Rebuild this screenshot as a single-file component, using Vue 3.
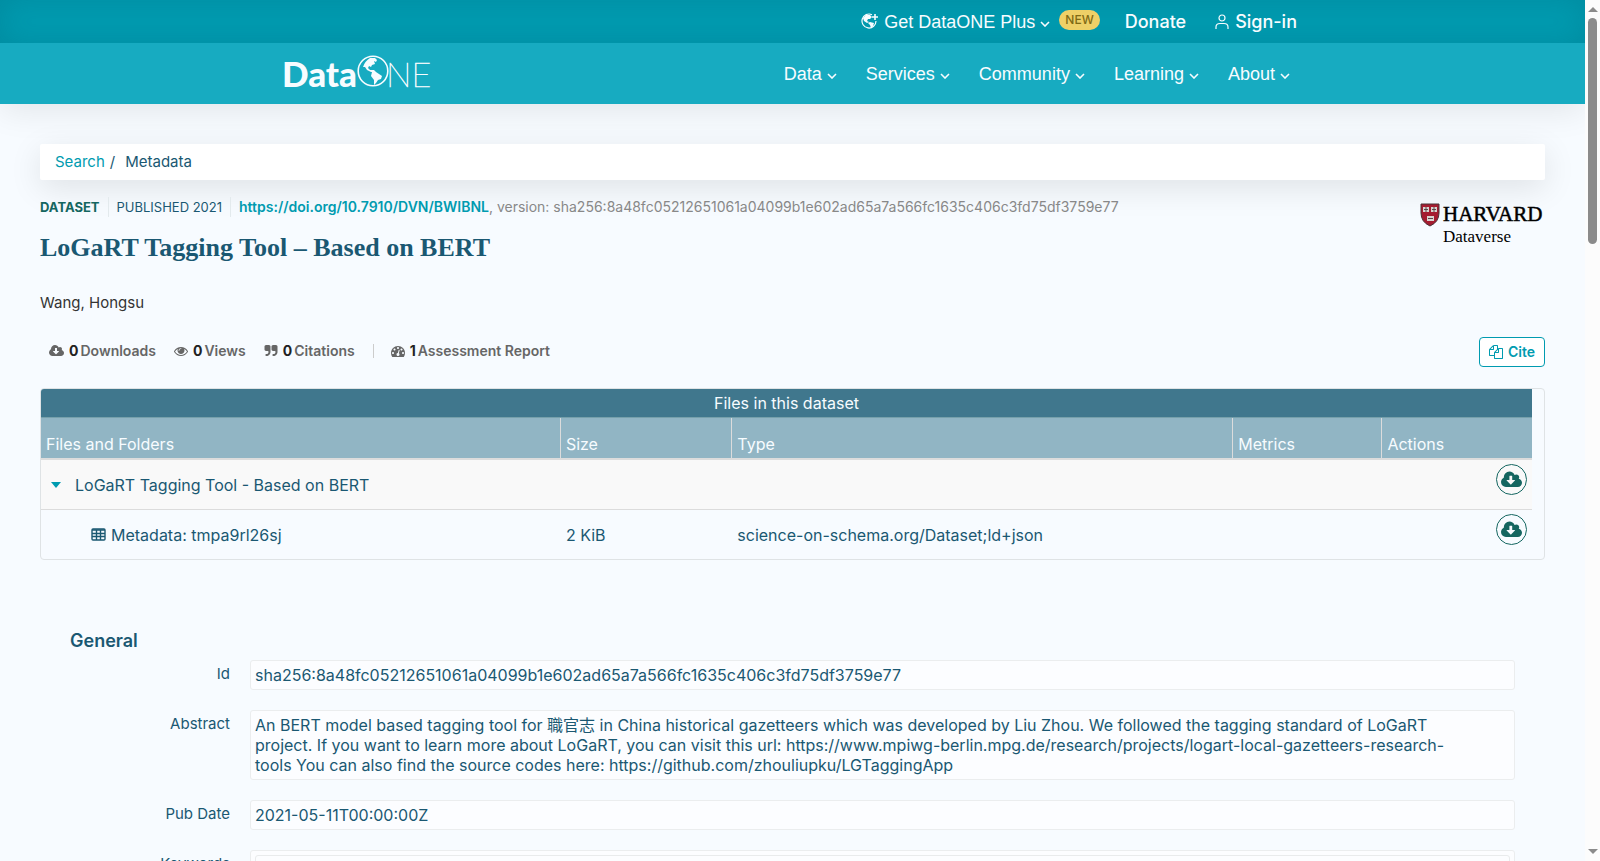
<script setup>
const menu = ['Data', 'Services', 'Community', 'Learning', 'About']

const columns = [
  { name: 'Files and Folders', cls: 'col-name' },
  { name: 'Size', cls: 'col-size' },
  { name: 'Type', cls: 'col-type' },
  { name: 'Metrics', cls: 'col-metrics' },
  { name: 'Actions', cls: 'col-actions' }
]

const cloud =
  'M1280 928q0-14-9-23t-23-9h-224v-352q0-13-9.5-22.5t-22.5-9.5h-192q-13 0-22.5 9.5t-9.5 22.5v352h-224q-13 0-22.5 9.5t-9.5 22.5q0 14 9 23l352 352q9 9 23 9t23-9l351-351q10-12 10-24zm640 224q0 159-112.5 271.5t-271.5 112.5h-1088q-185 0-316.5-131.5t-131.5-316.5q0-130 70-240t188-165q-2-30-2-43 0-212 150-362t362-150q156 0 285.5 87t188.5 231q71-62 166-62 106 0 181 75t75 181q0 76-41 138 130 31 213.5 135.5t83.5 238.5z'
const eye =
  'M1664 960q-152-236-381-353 61 104 61 225 0 185-131.5 316.5t-316.5 131.5-316.5-131.5-131.5-316.5q0-121 61-225-229 117-381 353 133 205 333.5 326.5t434.5 121.5 434.5-121.5 333.5-326.5zm-720-384q0-20-14-34t-34-14q-125 0-214.5 89.5t-89.5 214.5q0 20 14 34t34 14 34-14 14-34q0-86 61-147t147-61q20 0 34-14t14-34zm848 384q0 34-20 69-140 230-376.5 368.5t-499.5 138.5-499.5-139-376.5-368q-20-35-20-69t20-69q140-229 376.5-368t499.5-139 499.5 139 376.5 368q20 35 20 69z'
const quote =
  'M832 320v704q0 104-40.5 198.5t-109.5 163.5-163.5 109.5-198.5 40.5h-64q-26 0-45-19t-19-45v-128q0-26 19-45t45-19h64q106 0 181-75t75-181v-32q0-40-28-68t-68-28h-224q-80 0-136-56t-56-136v-384q0-80 56-136t136-56h384q80 0 136 56t56 136zm896 0v704q0 104-40.5 198.5t-109.5 163.5-163.5 109.5-198.5 40.5h-64q-26 0-45-19t-19-45v-128q0-26 19-45t45-19h64q106 0 181-75t75-181v-32q0-40-28-68t-68-28h-224q-80 0-136-56t-56-136v-384q0-80 56-136t136-56h384q80 0 136 56t56 136z'
const gauge =
  'M384 1152q0-53-37.5-90.5t-90.5-37.5-90.5 37.5-37.5 90.5 37.5 90.5 90.5 37.5 90.5-37.5 37.5-90.5zm192-448q0-53-37.5-90.5t-90.5-37.5-90.5 37.5-37.5 90.5 37.5 90.5 90.5 37.5 90.5-37.5 37.5-90.5zm428 481l101-382q6-26-7.5-48.5t-38.5-29.5-48 6.5-30 39.5l-101 382q-60 5-107 43.5t-63 98.5q-20 77 20 146t117 89 146-20 89-117q16-60-6-117t-72-91zm660-33q0-53-37.5-90.5t-90.5-37.5-90.5 37.5-37.5 90.5 37.5 90.5 90.5 37.5 90.5-37.5 37.5-90.5zm-640-640q0-53-37.5-90.5t-90.5-37.5-90.5 37.5-37.5 90.5 37.5 90.5 90.5 37.5 90.5-37.5 37.5-90.5zm448 192q0-53-37.5-90.5t-90.5-37.5-90.5 37.5-37.5 90.5 37.5 90.5 90.5 37.5 90.5-37.5 37.5-90.5zm320 448q0 261-141 483-19 29-54 29h-1402q-35 0-54-29-141-221-141-483 0-182 71-348t191-286 286-191 348-71 348 71 286 191 191 286 71 348z'
const files =
  'M1696 384q40 0 68 28t28 68v1216q0 40-28 68t-68 28h-960q-40 0-68-28t-28-68v-288h-544q-40 0-68-28t-28-68v-672q0-40 20-88t48-76l408-408q28-28 76-48t88-20h416q40 0 68 28t28 68v328q68-40 128-40h416zm-544 213l-299 299h299v-299zm-640-384l-299 299h299v-299zm196 647l316-316v-416h-384v416q0 40-28 68t-68 28h-416v640h512v-256q0-40 20-88t48-76zm956 804v-1152h-384v416q0 40-28 68t-68 28h-416v640h896z'
const northAmerica = 'M6 12 Q8 6 13 3 L18 3 L20 5 L19 7 L17 6 L18 9 L15 10 L14 12 L12 11 L11 13 L13 15 L17 15 L19 17 L14 17 L10 15 L8 12 Z'
const southAmerica = 'M15 17 L19 17 L22 19 L25 21 L24 24 L21 25 L19 28 L17 30 L17 25 L14 21 Z'
</script>

<template>
  <div class="window">
    <div class="page">
      <header>
        <div class="topbar">
          <div class="bar">
            <button class="plus" type="button">
              <svg class="globe-plus" viewBox="0 0 18 17" aria-hidden="true">
                <path d="M11 1.700 A7 7 0 1 0 15 8" fill="none" stroke="currentColor" stroke-width="1.200" />
                <path d="M2 5 L5 2 L9 2 L11 4 L9 6 L7 6 L6 8 L8 9 L6 10 L3 8 Z M9 9 L13 10 L12 13 L10 15 L9 12 L7 10 Z" fill="currentColor" />
                <path d="M14 1 V7 M11 4 H17" stroke="currentColor" stroke-width="1.600" />
              </svg>
              Get DataONE Plus
              <svg class="chevron" viewBox="0 0 10 6" aria-hidden="true"><path d="M1 1 L5 5 L9 1" /></svg>
            </button>
            <span class="new">NEW</span>
            <a class="donate" href="#">Donate</a>
            <a class="signin" href="#">
              <svg viewBox="0 0 14 16" aria-hidden="true">
                <circle cx="7" cy="4" r="3" />
                <path d="M1 15 V13 Q1 9.500 5 9.500 H9 Q13 9.500 13 13 V15" />
              </svg>
              Sign-in
            </a>
          </div>
        </div>
        <nav class="mainbar">
          <div class="bar">
            <a class="brand" href="#" aria-label="DataONE">
              <svg viewBox="0 0 160 50">
                <text class="brand-data" x="0" y="38">Data</text>
                <g transform="translate(75 6)">
                  <circle cx="16" cy="16" r="14.800" fill="none" stroke="#f7fcff" stroke-width="1.600" />
                  <path :d="northAmerica" fill="#f7fcff" />
                  <path :d="southAmerica" fill="#f7fcff" />
                </g>
                <text class="brand-one" x="104" y="38">NE</text>
              </svg>
            </a>
            <ul class="menu">
              <li v-for="item in menu" :key="item">
                <button type="button">
                  {{ item }}
                  <svg class="chevron" viewBox="0 0 10 6" aria-hidden="true"><path d="M1 1 L5 5 L9 1" /></svg>
                </button>
              </li>
            </ul>
          </div>
        </nav>
      </header>

      <main>
        <nav class="crumbs">
          <a href="#">Search</a><span class="slash">/</span><span>Metadata</span>
        </nav>

        <section class="heading">
          <div class="intro">
            <p class="citation">
              <strong class="kind">DATASET</strong>
              <span class="published">PUBLISHED 2021</span>
              <span class="ident"><a href="#">https://doi.org/10.7910/DVN/BWIBNL</a>, version: sha256:8a48fc05212651061a04099b1e602ad65a7a566fc1635c406c3fd75df3759e77</span>
            </p>
            <h1>LoGaRT Tagging Tool – Based on BERT</h1>
          </div>
          <a class="harvard" href="#" aria-label="Harvard Dataverse">
            <svg viewBox="0 0 126 44">
              <path d="M1 1 H19 V10 Q19 19 10 23 Q1 19 1 10 Z" fill="#a51c30" stroke="#4b3237" stroke-width="1" />
              <g fill="#d9d4d0">
                <rect x="3" y="4" width="6" height="5" />
                <rect x="11" y="4" width="6" height="5" />
                <rect x="7" y="13" width="7" height="5" />
              </g>
              <path d="M4 6.500 H8 M12 6.500 H16 M8 15.500 H13 M6 4 V9 M14 4 V9" stroke="#59494b" stroke-width="1" />
              <text class="harvard-name" x="23" y="18">HARVARD</text>
              <text class="harvard-sub" x="23" y="39">Dataverse</text>
            </svg>
          </a>
        </section>

        <p class="author">Wang, Hongsu</p>

        <div class="toolbar">
          <ul class="stats">
            <li><svg class="wide" viewBox="0 0 1920 1792"><path :d="cloud" /></svg><b>0</b>Downloads</li>
            <li><svg viewBox="0 0 1792 1792"><path :d="eye" /></svg><b>0</b>Views</li>
            <li><svg viewBox="0 0 1792 1792"><path :d="quote" /></svg><b>0</b>Citations</li>
            <li class="report"><svg viewBox="0 0 1792 1792"><path :d="gauge" /></svg><b>1</b>Assessment Report</li>
          </ul>
          <button class="cite" type="button">
            <svg viewBox="0 0 1792 1792" aria-hidden="true"><path :d="files" /></svg>Cite
          </button>
        </div>

        <div class="files">
          <table>
            <caption>Files in this dataset</caption>
            <thead>
              <tr>
                <th v-for="c in columns" :key="c.name" :class="c.cls" scope="col">{{ c.name }}</th>
              </tr>
            </thead>
            <tbody>
              <tr class="folder">
                <td colspan="4"><div class="entry"><i class="caret"></i>LoGaRT Tagging Tool - Based on BERT</div></td>
                <td class="action">
                  <button type="button" aria-label="Download all"><svg viewBox="0 0 1920 1792"><path :d="cloud" /></svg></button>
                </td>
              </tr>
              <tr>
                <td>
                  <div class="entry file">
                    <svg viewBox="0 0 15 13" aria-hidden="true">
                      <rect x="1" y="1" width="13" height="11" rx="1" />
                      <path d="M1 2 H14 M1 5.500 H14 M1 8.500 H14 M5.500 2 V12 M9.500 2 V12" />
                    </svg>
                    Metadata: tmpa9rl26sj
                  </div>
                </td>
                <td>2 KiB</td>
                <td>science-on-schema.org/Dataset;ld+json</td>
                <td></td>
                <td class="action">
                  <button type="button" aria-label="Download metadata"><svg viewBox="0 0 1920 1792"><path :d="cloud" /></svg></button>
                </td>
              </tr>
            </tbody>
          </table>
        </div>

        <section class="general">
          <h2>General</h2>
          <dl>
            <dt>Id</dt>
            <dd>sha256:8a48fc05212651061a04099b1e602ad65a7a566fc1635c406c3fd75df3759e77</dd>
            <dt>Abstract</dt>
            <dd class="prose">An BERT model based tagging tool for 職官志 in China historical gazetteers which was developed by Liu Zhou. We followed the tagging standard of LoGaRT project. If you want to learn more about LoGaRT, you can visit this url: https://www.mpiwg-berlin.mpg.de/research/projects/logart-local-gazetteers-research-tools You can also find the source codes here: https://github.com/zhouliupku/LGTaggingApp</dd>
            <dt>Pub Date</dt>
            <dd>2021-05-11T00:00:00Z</dd>
            <dt>Keywords</dt>
            <dd><div class="nested"></div></dd>
          </dl>
        </section>
      </main>
    </div>
    <div class="scroll" aria-hidden="true">
      <i class="up"></i>
      <i class="thumb"></i>
      <i class="down"></i>
    </div>
  </div>
</template>

<style>
body {
  margin: 0;
  background: #f7fbff;
}
</style>

<style scoped>
* {
  box-sizing: border-box;
}
.window {
  display: flex;
  height: 100vh;
  overflow: hidden;
  color: #1a5872;
  font: 400 16px/20px Inter, "Noto Sans CJK TC", sans-serif;
}
.page {
  flex: 1;
  min-width: 0;
  overflow: hidden;
}
button {
  font: inherit;
  color: inherit;
  background: none;
  border: 0;
  padding: 0;
}
a {
  color: #009bb0;
  text-decoration: none;
}
ul, p, h1, h2, dl, dd {
  margin: 0;
  padding: 0;
  list-style: none;
}

/* header */
header {
  position: relative;
  color: #f7fcff;
  font: 400 18px/20px "Liberation Sans", sans-serif;
  box-shadow: 0 6px 32px rgba(0, 0, 0, 0.09);
}
header a {
  color: inherit;
}
.topbar {
  background: #009cb1;
  box-shadow: inset 0 0 32px rgba(0, 100, 120, 0.3);
}
.mainbar {
  background: #17abc1;
}
.bar {
  display: flex;
  align-items: center;
  max-width: 1021px;
  margin: 0 auto;
}
.topbar .bar {
  height: 43px;
  justify-content: flex-end;
  padding-right: 6px;
}
.mainbar .bar {
  height: 61px;
  justify-content: space-between;
  padding-right: 13px;
}
.plus, .signin, .menu button {
  display: flex;
  align-items: center;
}
.globe-plus {
  width: 18px;
  height: 17px;
  margin-right: 5px;
}
.chevron {
  width: 10px;
  height: 6px;
  margin: 4px 0 0 5px;
  fill: none;
  stroke: currentColor;
  stroke-width: 1.6;
}
.new {
  margin: 0 25px 3px 9px;
  padding: 0 6px;
  border-radius: 10px;
  background: #eed067;
  color: #7f6a14;
  font: 500 12px/20px Inter, sans-serif;
}
.donate, .signin {
  font: 500 18px/20px Inter, sans-serif;
}
.signin {
  margin-left: 29px;
}
.signin svg {
  width: 14px;
  height: 16px;
  margin-right: 6px;
  fill: none;
  stroke: currentColor;
  stroke-width: 1.2;
}
.brand svg {
  display: block;
  width: 160px;
  height: 50px;
}
.brand-data {
  font: 900 35px Lato, sans-serif;
  fill: #f7fcff;
}
.brand-one {
  font: 100 34px Lato, sans-serif;
  fill: #f7fcff;
  stroke: #f7fcff;
  stroke-width: 0.7;
}
.menu {
  display: flex;
  gap: 29px;
}

/* page body */
main {
  padding: 40px 40px 0;
}
.crumbs {
  display: flex;
  padding: 8px 15px;
  border-radius: 2px;
  background: #fff;
  box-shadow: 0 8px 32px rgba(0, 0, 0, 0.1);
  font-size: 15px;
}
.slash {
  margin: 0 10px 0 5px;
}
.heading {
  display: flex;
  justify-content: space-between;
  align-items: flex-start;
  padding-top: 17px;
}
.citation {
  display: flex;
  font-size: 14px;
}
.citation > * + * {
  margin-left: 8px;
  padding-left: 8px;
  border-left: 1px solid #e3eaed;
}
.kind {
  color: #146660;
  font-size: 13px;
}
.published {
  font-size: 13px;
}
.ident {
  color: #888;
}
.ident a {
  font-weight: 600;
}
h1 {
  margin-top: 13px;
  font: 700 26px/36px "Liberation Serif", serif;
}
.harvard svg {
  display: block;
  width: 126px;
  height: 44px;
  margin: 6px -1px 0 0;
}
.harvard-name {
  font: 400 21px "Liberation Serif", serif;
  stroke: #000;
  stroke-width: 0.5;
}
.harvard-sub {
  font: 400 17px "Liberation Serif", serif;
}
.author {
  margin-top: 27px;
  color: #333;
  font-size: 15px;
}
.toolbar {
  display: flex;
  justify-content: space-between;
  margin-top: 24px;
}
.stats {
  display: flex;
  align-items: center;
  gap: 18px;
  padding: 0 0 2px 9px;
  color: #666;
  font: 600 14px/20px Inter, sans-serif;
}
.stats li {
  display: flex;
  align-items: center;
}
.stats svg {
  width: 14px;
  height: 14px;
  margin-right: 5px;
  fill: #666;
}
.stats .wide {
  width: 15px;
}
.stats b {
  margin-right: 2px;
  color: #222;
  font-weight: 700;
}
.stats .report::before {
  content: "";
  height: 14px;
  margin-right: 17px;
  border-left: 1px solid #ccc;
}
.cite {
  display: flex;
  align-items: center;
  height: 30px;
  padding: 0 9px;
  border: 1px solid #009bb0;
  border-radius: 4px;
  background: #fff;
  color: #009bb0;
  font: 600 14px/20px Inter, sans-serif;
}
.cite svg {
  width: 14px;
  height: 14px;
  margin-right: 5px;
  fill: currentColor;
}

/* file table */
.files {
  margin-top: 21px;
  padding-right: 12px;
  border: 1px solid #dfe3e5;
  border-radius: 4px;
  overflow: hidden;
}
table {
  width: 100%;
  table-layout: fixed;
  border-collapse: separate;
  border-spacing: 0;
}
caption {
  height: 29px;
  border-bottom: 1px solid #76a0ab;
  background: #40778d;
  color: #f7fcff;
  line-height: 28px;
}
th {
  height: 42px;
  padding: 10px 5px 4px;
  border-bottom: 2px solid #dcdcdc;
  background: #91b5c4;
  color: #f7fcff;
  font-weight: 400;
  text-align: left;
  vertical-align: bottom;
}
th + th {
  border-left: 1px solid #dcdcdc;
}
.col-name { width: 34.8%; }
.col-size { width: 11.5%; }
.col-type { width: 33.6%; }
.col-metrics { width: 10%; }
.col-actions { width: 10.1%; }
td {
  height: 49px;
  padding: 0 6px;
}
.folder td {
  height: 50px;
  background: #f9f9f9;
  border-bottom: 1px solid #dcdcdc;
}
.entry {
  display: flex;
  align-items: center;
  padding-left: 4px;
}
.caret {
  margin-right: 14px;
  border: 5px solid transparent;
  border-top: 6px solid #009bb0;
  border-bottom: 0;
}
.file {
  padding-left: 44px;
}
.file svg {
  width: 15px;
  height: 13px;
  margin-right: 5px;
  fill: none;
  stroke: #1a5872;
  stroke-width: 1.4;
}
.action {
  padding: 4px 5px;
  text-align: right;
  vertical-align: top;
}
.action button {
  width: 31px;
  height: 31px;
  border: 1px solid #146660;
  border-radius: 50%;
}
.action svg {
  display: block;
  width: 21px;
  height: 20px;
  margin: 0 auto;
  fill: #146660;
}

/* metadata fields */
.general {
  padding: 71px 30px 0;
}
h2 {
  font: 600 18px/20px Inter, sans-serif;
}
dl {
  display: grid;
  grid-template-columns: 160px 1fr;
  gap: 20px;
  margin-top: 9px;
}
dt {
  padding-top: 4px;
  text-align: right;
  font-size: 15px;
}
dd {
  padding: 4px;
  border: 1px solid #ebedee;
  border-radius: 3px;
  background: #fcfdff;
}
.prose {
  padding-right: 56px;
}
.nested {
  height: 30px;
  border: 1px solid #e9ebec;
  border-radius: 3px;
}

/* window scroll bar */
.scroll {
  display: flex;
  flex-direction: column;
  align-items: center;
  width: 15px;
  padding: 7px 0;
  background: #fcfcfc;
}
.scroll .up, .scroll .down {
  border: 5px solid transparent;
}
.scroll .up {
  border-top: 0;
  border-bottom-color: #8b8b8b;
}
.scroll .down {
  margin-top: auto;
  border-bottom: 0;
  border-top-color: #8b8b8b;
}
.thumb {
  width: 9px;
  height: 226px;
  margin-top: 6px;
  border-radius: 5px;
  background: #8b8b8b;
}
</style>
